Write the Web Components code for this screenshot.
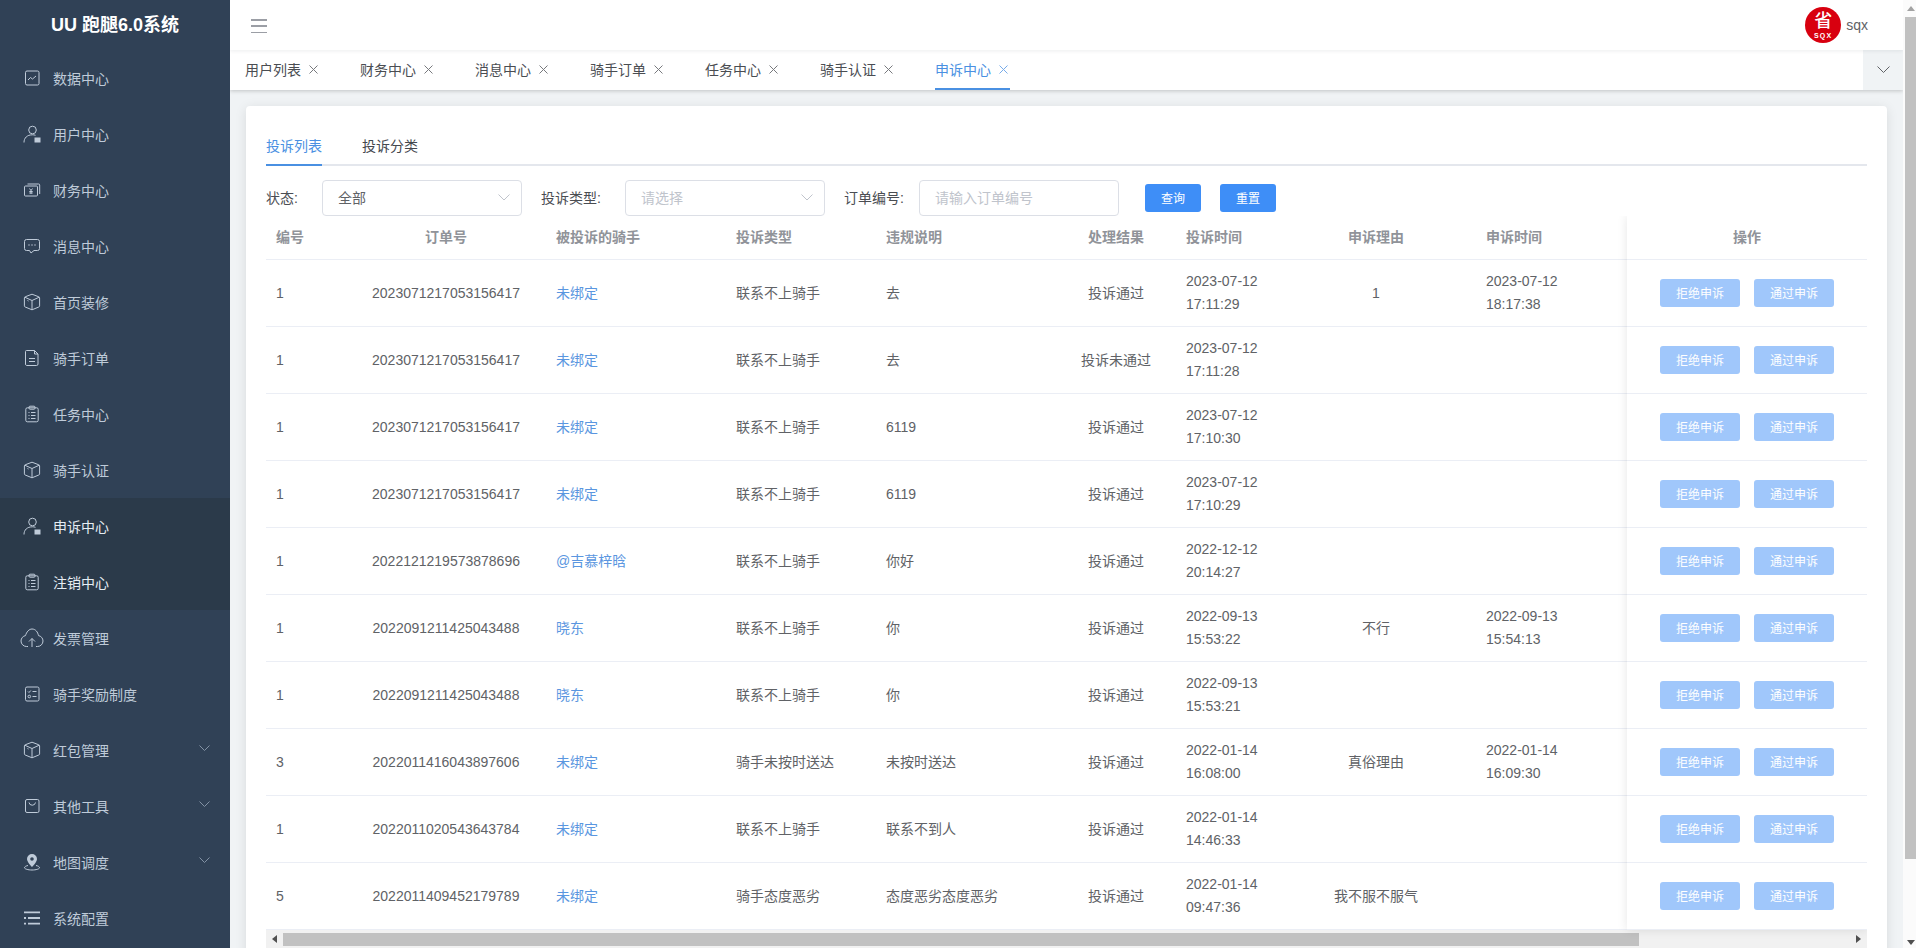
<!DOCTYPE html>
<html lang="zh-CN">
<head>
<meta charset="utf-8">
<title>UU 跑腿6.0系统</title>
<style>
  html, body {
    margin: 0;
    height: 948px;
    overflow: hidden;
    font-family: "Liberation Sans", "Noto Sans CJK SC", sans-serif;
    font-size: 14px;
  }
</style>
</head>
<body>
<app-shell>
  <side-bar slot="side" heading="UU 跑腿6.0系统">
    <side-item icon="chart" label="数据中心"></side-item>
    <side-item icon="user" label="用户中心"></side-item>
    <side-item icon="money" label="财务中心"></side-item>
    <side-item icon="chat" label="消息中心"></side-item>
    <side-item icon="cube" label="首页装修"></side-item>
    <side-item icon="doc" label="骑手订单"></side-item>
    <side-item icon="clip" label="任务中心"></side-item>
    <side-item icon="cube" label="骑手认证"></side-item>
    <side-item icon="user" label="申诉中心" active></side-item>
    <side-item icon="clip" label="注销中心" active></side-item>
    <side-item icon="cloud" label="发票管理"></side-item>
    <side-item icon="check" label="骑手奖励制度"></side-item>
    <side-item icon="cube" label="红包管理" arrow></side-item>
    <side-item icon="bag" label="其他工具" arrow></side-item>
    <side-item icon="pin" label="地图调度" arrow></side-item>
    <side-item icon="list" label="系统配置"></side-item>
  </side-bar>
  <top-bar slot="main" username="sqx"></top-bar>
  <tag-bar slot="main">
    <tag-item label="用户列表"></tag-item>
    <tag-item label="财务中心"></tag-item>
    <tag-item label="消息中心"></tag-item>
    <tag-item label="骑手订单"></tag-item>
    <tag-item label="任务中心"></tag-item>
    <tag-item label="骑手认证"></tag-item>
    <tag-item label="申诉中心" active></tag-item>
  </tag-bar>
  <complaint-card slot="main"></complaint-card>
  <page-scrollbar slot="bar"></page-scrollbar>
</app-shell>

<script>
const ICONS = {
  chart: '<rect x="2.5" y="2" width="13.5" height="14" rx="1.5"/><path d="M5 11l2.5-2.5 2 1.5L13 7"/>',
  user: '<circle cx="9.5" cy="5" r="3.800"/><path d="M1 17.500C1 13 4 9.800 9.500 9.800c1 0 2 .1 3 .5"/><rect x="11.500" y="12.500" width="6" height="5" fill="currentColor" stroke="none"/>',
  money: '<rect x="1.5" y="5" width="13" height="10" rx="1"/><path d="M4.5 3h11.200a1 1 0 0 1 1 1v9"/><path d="M6.500 7.500L8 9.500l1.500-2M8 9.500V13M6.300 10.500h3.400M6.300 12h3.400"/>',
  chat: '<path d="M3.500 2.500h11a2 2 0 0 1 2 2v7a2 2 0 0 1-2 2h-3.500L8 16l-1.500-2.500h-3a2 2 0 0 1-2-2v-7a2 2 0 0 1 2-2z"/><path d="M5.500 8h1M8.500 8h1M11.500 8h1" stroke-width="1.500"/>',
  cube: '<path d="M9 1.200l6.800 2.600c.5.2.8.6.8 1.100v8c0 .5-.3.9-.8 1.100L9 16.800l-6.800-2.800c-.5-.2-.8-.6-.8-1.100v-8c0-.5.3-.9.8-1.100z"/><path d="M1.800 4.200L9 7.500l7.200-3.300M9 7.500v9.200"/><path d="M4.500 7.500l1 .5"/>',
  doc: '<path d="M3.500 1.500h8l3.500 3.500v10a1.500 1.500 0 0 1-1.500 1.500h-10A1.500 1.500 0 0 1 2.500 15V2.500a1 1 0 0 1 1-1z"/><path d="M11.500 1.500V5H15M6 9.500h6M6 12.500h6"/>',
  clip: '<rect x="2.800" y="2.800" width="12.400" height="14" rx="1.500"/><rect x="6" y="1.200" width="6" height="3" rx="1"/><path d="M5.500 7.500h1M8 7.500h4.500M5.500 10.500h1M8 10.500h4.500M5.500 13.500h1M8 13.500h4.500"/>',
  cloud: '<path d="M8 20.500H6.500C3.500 20.500 1 18 1 15c0-2.700 2-5 4.500-5.400C6.500 6 9 3 12 3c3.500 0 5.800 3 6.500 6.600C21 10 23 12.300 23 15c0 3-2.500 5.500-5.500 5.500H16"/><path d="M12 21v-8.500M9 15.500l3-3 3 3"/>',
  check: '<rect x="2.500" y="2" width="13.500" height="14" rx="1.500"/><path d="M5 6.500l1 1 1.800-2M9.500 6.500h4M9.500 11.500h4"/><circle cx="6.300" cy="11.500" r="1.300"/>',
  bag: '<rect x="2.500" y="2.500" width="13.500" height="13" rx="1.500"/><path d="M6 5.500a3.300 3.300 0 0 0 6.500 0"/>',
  pin: '<path fill="currentColor" stroke="none" fill-rule="evenodd" d="M9 1a5 5 0 0 1 5 5c0 3.200-5 8-5 8S4 9.200 4 6a5 5 0 0 1 5-5zm0 3.200a1.800 1.800 0 1 0 0 3.600 1.800 1.800 0 0 0 0-3.600z"/><path d="M5 12.500c-2 .4-3.500 1.200-3.500 2.200C1.500 16 5 17 9 17s7.500-1 7.500-2.300c0-1-1.500-1.800-3.500-2.200"/>',
  list: '<path fill="currentColor" stroke="none" d="M1 2.500h16v1.800H1zM1 8.100h2v1.800H1zM5 8.100h12v1.800H5zM1 13.700h2v1.800H1zM5 13.700h12v1.800H5z"/>',
};

class AppShell extends HTMLElement {
  constructor() {
    super();
    this.attachShadow({ mode: "open" });
    this.shadowRoot.innerHTML = `
      <style>
        :host { display: flex; width: 1916px; height: 948px; overflow: hidden; background: #f0f3f5; }
        .main { width: 1673px; height: 948px; overflow: hidden; display: flex; flex-direction: column; }
      </style>
      <slot name="side"></slot>
      <div class="main"><slot name="main"></slot></div>
      <slot name="bar"></slot>
    `;
  }
}

class SideBar extends HTMLElement {
  constructor() {
    super();
    this.attachShadow({ mode: "open" });
    this.shadowRoot.innerHTML = `
      <style>
        :host { display: block; width: 230px; height: 948px; flex: none; background: #304156; overflow: hidden; }
        h1 {
          margin: 0; height: 50px; line-height: 50px; text-align: center;
          color: #fff; font-size: 18px; font-weight: 700;
        }
      </style>
      <h1>${this.getAttribute("heading")}</h1>
      <slot></slot>
    `;
  }
}

class SideItem extends HTMLElement {
  constructor() {
    super();
    this.attachShadow({ mode: "open" });
  }

  connectedCallback() {
    const name = this.getAttribute("icon");
    const box = name === "cloud"
      ? 'width="24" height="24" viewBox="0 0 24 24" style="margin:-3px"'
      : 'width="18" height="18" viewBox="0 0 18 18"';
    this.shadowRoot.innerHTML = `
      <style>
        :host {
          display: flex; align-items: center; gap: 12px; height: 56px;
          padding: 0 20px 0 23px; box-sizing: border-box;
          color: #bfcbd9; font-size: 14px;
        }
        :host([active]) { background: #2b3a4a; color: #e6edf4; }
        svg { flex: none; fill: none; stroke: currentColor; stroke-width: 1; stroke-linejoin: round; }
        .icon { color: #bfcbd9; }
        .label { flex: 1; }
        .arrow { width: 11px; height: 6px; margin: 0 0 4px; color: #8392a5; }
      </style>
      <svg class="icon" ${box}>${ICONS[name]}</svg>
      <span class="label">${this.getAttribute("label")}</span>
      ${this.hasAttribute("arrow") ? '<svg class="arrow" viewBox="0 0 11 6"><path d="M.5.5l5 5 5-5"/></svg>' : ""}
    `;
  }
}

class TopBar extends HTMLElement {
  constructor() {
    super();
    this.attachShadow({ mode: "open" });
    this.shadowRoot.innerHTML = `
      <style>
        :host {
          display: flex; align-items: center; justify-content: space-between;
          height: 50px; flex: none; background: #fff; padding: 0 35px 0 21px;
          box-sizing: border-box; position: relative; z-index: 2;
          box-shadow: 0 1px 4px rgba(0, 21, 41, .08);
        }
        .burger { width: 16px; height: 14px; margin-top: 2px; display: flex; flex-direction: column; justify-content: space-between; }
        .burger i { display: block; height: 1.5px; background: #9b9ea5; }
        .user { display: flex; align-items: center; gap: 5px; color: #606266; font-size: 14px; }
        .avatar {
          width: 36px; height: 36px; border-radius: 50%; background: #d8000f; color: #fff;
          display: flex; flex-direction: column; align-items: center; overflow: hidden;
        }
        .avatar b { font-size: 18px; line-height: 20px; margin-top: 4px; font-weight: 500; }
        .avatar small { font-size: 7px; line-height: 7px; margin-top: 1px; font-weight: 700; letter-spacing: 1.200px; }
      </style>
      <div class="burger"><i></i><i></i><i></i></div>
      <div class="user">
        <div class="avatar"><b>省</b><small>SQX</small></div>
        <span>${this.getAttribute("username")}</span>
      </div>
    `;
  }
}

class TagBar extends HTMLElement {
  constructor() {
    super();
    this.attachShadow({ mode: "open" });
    this.shadowRoot.innerHTML = `
      <style>
        :host {
          display: flex; height: 40px; flex: none; background: #fff; position: relative; z-index: 1;
          box-shadow: 0 1px 4px rgba(0, 0, 0, .2);
        }
        .tags { flex: 1; display: flex; gap: 40px; padding-left: 15px; }
        .more { width: 40px; background: #f0f3f5; display: flex; align-items: center; justify-content: center; color: #606266; }
        svg { width: 13px; height: 7px; fill: none; stroke: currentColor; margin-bottom: 2px; }
      </style>
      <div class="tags"><slot></slot></div>
      <div class="more"><svg viewBox="0 0 13 7"><path d="M.5.5l6 6 6-6"/></svg></div>
    `;
  }
}

class TagItem extends HTMLElement {
  constructor() {
    super();
    this.attachShadow({ mode: "open" });
    this.shadowRoot.innerHTML = `
      <style>
        :host {
          display: flex; align-items: center; gap: 8px; width: 75px; height: 40px; padding-bottom: 2px;
          box-sizing: border-box; color: #4a4d52; font-size: 14px; white-space: nowrap;
        }
        :host([active]) { color: #4a90e2; box-shadow: inset 0 -2px 0 #4a90e2; }
        svg { width: 9px; height: 9px; fill: none; stroke: currentColor; opacity: .75; }
      </style>
      <span>${this.getAttribute("label")}</span>
      <svg viewBox="0 0 9 9"><path d="M.5.5l8 8M8.500.5l-8 8"/></svg>
    `;
  }
}

class FilterField extends HTMLElement {
  constructor() {
    super();
    this.attachShadow({ mode: "open" });
  }

  connectedCallback() {
    const value = this.getAttribute("value");
    const hint = this.getAttribute("placeholder");
    this.shadowRoot.innerHTML = `
      <style>
        :host {
          display: flex; align-items: center; justify-content: space-between; width: 200px; height: 36px;
          box-sizing: border-box; border: 1px solid #dcdfe6; border-radius: 4px; padding: 0 11px 2px 15px;
          background: #fff; color: ${value ? "#606266" : "#c0c4cc"}; font-size: 14px; flex: none;
        }
        svg { width: 12px; height: 7px; fill: none; stroke: #c0c4cc; }
      </style>
      <span>${value || hint}</span>
      ${this.hasAttribute("select") ? '<svg viewBox="0 0 12 7"><path d="M.5.5L6 6l5.500-5.500"/></svg>' : ""}
    `;
  }
}

class FilterBar extends HTMLElement {
  constructor() {
    super();
    this.attachShadow({ mode: "open" });
    this.shadowRoot.innerHTML = `
      <style>
        :host { display: flex; align-items: center; height: 36px; color: #4a4d52; font-size: 14px; }
        label { flex: none; white-space: nowrap; margin-bottom: 2px; }
        button {
          width: 56px; height: 28px; border: 0; border-radius: 3px; padding: 0 0 2px;
          background: #3e8ef7; color: #fff; font: inherit; font-size: 12px;
        }
      </style>
      <label style="width:56px">状态:</label>
      <filter-field select value="全部"></filter-field>
      <label style="width:84px;margin-left:19px">投诉类型:</label>
      <filter-field select placeholder="请选择"></filter-field>
      <label style="width:75px;margin-left:19px">订单编号:</label>
      <filter-field placeholder="请输入订单编号"></filter-field>
      <button style="margin-left:26px">查询</button>
      <button style="margin-left:19px">重置</button>
    `;
  }
}

const COLUMNS = "80px 200px 180px 150px 180px 120px 100px 200px 151px";

const ROWS = [
  ["1", "2023071217053156417", "未绑定", "联系不上骑手", "去", "投诉通过", "2023-07-12", "17:11:29", "1", "2023-07-12", "18:17:38"],
  ["1", "2023071217053156417", "未绑定", "联系不上骑手", "去", "投诉未通过", "2023-07-12", "17:11:28", "", "", ""],
  ["1", "2023071217053156417", "未绑定", "联系不上骑手", "6119", "投诉通过", "2023-07-12", "17:10:30", "", "", ""],
  ["1", "2023071217053156417", "未绑定", "联系不上骑手", "6119", "投诉通过", "2023-07-12", "17:10:29", "", "", ""],
  ["1", "2022121219573878696", "@吉慕梓晗", "联系不上骑手", "你好", "投诉通过", "2022-12-12", "20:14:27", "", "", ""],
  ["1", "2022091211425043488", "晓东", "联系不上骑手", "你", "投诉通过", "2022-09-13", "15:53:22", "不行", "2022-09-13", "15:54:13"],
  ["1", "2022091211425043488", "晓东", "联系不上骑手", "你", "投诉通过", "2022-09-13", "15:53:21", "", "", ""],
  ["3", "2022011416043897606", "未绑定", "骑手未按时送达", "未按时送达", "投诉通过", "2022-01-14", "16:08:00", "真俗理由", "2022-01-14", "16:09:30"],
  ["1", "2022011020543643784", "未绑定", "联系不上骑手", "联系不到人", "投诉通过", "2022-01-14", "14:46:33", "", "", ""],
  ["5", "2022011409452179789", "未绑定", "骑手态度恶劣", "态度恶劣态度恶劣", "投诉通过", "2022-01-14", "09:47:36", "我不服不服气", "", ""],
];

class ComplaintTable extends HTMLElement {
  constructor() {
    super();
    this.attachShadow({ mode: "open" });
    const heads = ["编号", "订单号", "被投诉的骑手", "投诉类型", "违规说明", "处理结果", "投诉时间", "申诉理由", "申诉时间"];
    const centered = [1, 5, 7];
    const cls = (i) => (centered.includes(i) ? "cell mid" : "cell");
    const head = heads.map((h, i) => `<div class="${cls(i)}">${h}</div>`).join("");
    const body = ROWS.map((r) => `
      <div class="row">
        <div class="cell">${r[0]}</div>
        <div class="cell mid">${r[1]}</div>
        <div class="cell link">${r[2]}</div>
        <div class="cell">${r[3]}</div>
        <div class="cell">${r[4]}</div>
        <div class="cell mid">${r[5]}</div>
        <div class="cell">${r[6]}<br>${r[7]}</div>
        <div class="cell mid">${r[8]}</div>
        <div class="cell">${r[9]}${r[10] ? "<br>" + r[10] : ""}</div>
      </div>`).join("");
    const actions = ROWS.map(() => `
      <div class="row ops">
        <button>拒绝申诉</button><button>通过申诉</button>
      </div>`).join("");
    this.shadowRoot.innerHTML = `
      <style>
        :host { display: flex; color: #606266; font-size: 14px; }
        .scroll { width: 1361px; flex: none; }
        .fixed {
          width: 240px; flex: none; background: #fff; z-index: 1;
          box-shadow: 0 0 10px rgba(0, 0, 0, .1); clip-path: inset(0 0 -10px -12px);
        }
        .row {
          display: grid; grid-template-columns: ${COLUMNS}; height: 67px; box-sizing: border-box;
          border-bottom: 1px solid #ebeef5; align-items: center; line-height: 23px;
        }
        .row.head { height: 44px; color: #909399; font-weight: 700; }
        .cell { padding: 0 10px; }
        .mid { text-align: center; }
        .link { color: #5a96e0; }
        .ops { display: flex; justify-content: center; gap: 14px; }
        .fixed .head { display: flex; justify-content: center; }
        button {
          width: 80px; height: 28px; border: 0; border-radius: 3px; padding: 2px 0 0; flex: none;
          background: #a0c7fb; color: #fff; font: inherit; font-size: 12px;
        }
      </style>
      <div class="scroll">
        <div class="row head">${head}</div>
        ${body}
      </div>
      <div class="fixed">
        <div class="row head">操作</div>
        ${actions}
      </div>
    `;
  }
}

class ScrollTrack extends HTMLElement {
  constructor() {
    super();
    this.attachShadow({ mode: "open" });
    this.shadowRoot.innerHTML = `
      <style>
        :host { display: flex; align-items: flex-start; justify-content: space-between; height: 19px; background: #f1f1f1; padding-top: 3px; box-sizing: border-box; }
        .thumb { width: 1356px; height: 13px; background: #c1c1c1; margin-left: 6px; }
        .l, .r { width: 0; height: 0; border: 4px solid transparent; margin-top: 2px; }
        .l { border-right: 5px solid #505050; border-left: 0; margin-left: 6px; }
        .r { border-left: 5px solid #505050; border-right: 0; margin-left: auto; margin-right: 6px; }
      </style>
      <i class="l"></i><div class="thumb"></div><i class="r"></i>
    `;
  }
}

class ComplaintCard extends HTMLElement {
  constructor() {
    super();
    this.attachShadow({ mode: "open" });
    this.shadowRoot.innerHTML = `
      <style>
        :host {
          display: block; margin: 16px 16px 0; padding: 20px 20px 0; background: #fff;
          border-radius: 4px; box-shadow: 0 2px 12px rgba(0, 0, 0, .1); flex: none; height: 860px; box-sizing: border-box;
        }
        .tabs { display: flex; gap: 40px; height: 40px; box-shadow: inset 0 -2px 0 #e4e7ed; margin-bottom: 14px; }
        .tabs span { line-height: 40px; color: #44474d; font-size: 14px; }
        .tabs span.on { color: #4a90e2; box-shadow: inset 0 -2px 0 #4a90e2; }
      </style>
      <div class="tabs"><span class="on">投诉列表</span><span>投诉分类</span></div>
      <filter-bar></filter-bar>
      <complaint-table></complaint-table>
      <scroll-track></scroll-track>
    `;
  }
}

class PageScrollbar extends HTMLElement {
  constructor() {
    super();
    this.attachShadow({ mode: "open" });
    this.shadowRoot.innerHTML = `
      <style>
        :host { display: block; width: 13px; height: 948px; flex: none; background: #fbfbfb; overflow: hidden; }
        .thumb { width: 11px; height: 842px; margin: 0 0 0 2px; background: #c1c1c1; }
        .up, .down { display: block; width: 0; height: 0; border: 4px solid transparent; margin-left: 4px; }
        .up { border-bottom: 5px solid #a3a3a3; border-top: 0; margin-top: 6px; margin-bottom: 6px; }
        .down { border-top: 5px solid #505050; border-bottom: 0; margin-top: 81px; }
      </style>
      <i class="up"></i>
      <div class="thumb"></div>
      <i class="down"></i>
    `;
  }
}

customElements.define("app-shell", AppShell);
customElements.define("side-bar", SideBar);
customElements.define("side-item", SideItem);
customElements.define("top-bar", TopBar);
customElements.define("tag-bar", TagBar);
customElements.define("tag-item", TagItem);
customElements.define("filter-field", FilterField);
customElements.define("filter-bar", FilterBar);
customElements.define("complaint-table", ComplaintTable);
customElements.define("scroll-track", ScrollTrack);
customElements.define("complaint-card", ComplaintCard);
customElements.define("page-scrollbar", PageScrollbar);
</script>
</body>
</html>
